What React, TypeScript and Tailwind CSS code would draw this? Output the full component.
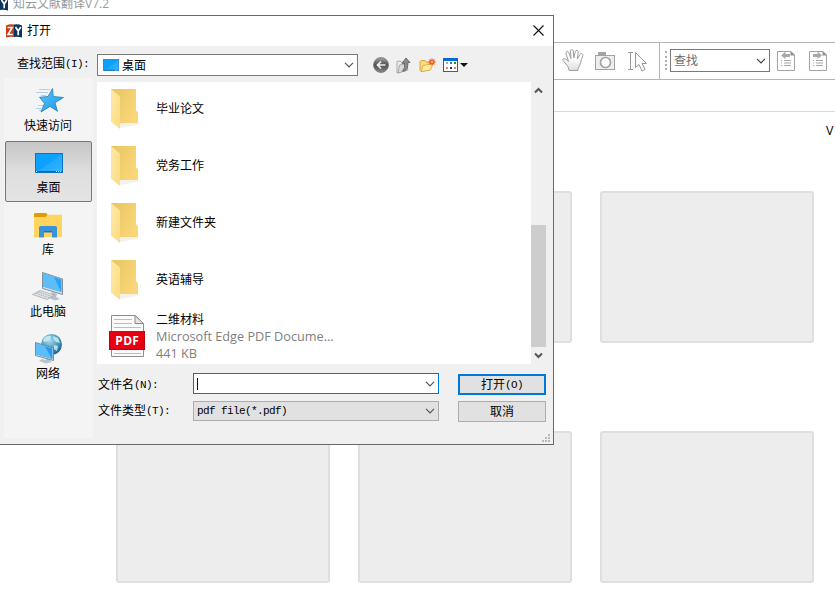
import React from "react";

const CJK = "font-['Open_Sans','Noto_Sans_CJK_SC',sans-serif]";

const Chevron: React.FC<{ color?: string }> = ({ color = "#555" }) => (
  <svg width="10" height="6" viewBox="0 0 10 6" fill="none" className="shrink-0">
    <path d="M1 0.8 L5 4.8 L9 0.8" stroke={color} strokeWidth="1.2" />
  </svg>
);

const ZyLogo: React.FC = () => (
  <svg width="16" height="14" viewBox="0 0 16 14" className="shrink-0">
    <path d="M0 1.500 Q4 -0.500 8 0.500 V13 Q4 12.500 0 13.500Z" fill="#c93a16" />
    <path d="M8 0.500 Q12 -0.500 16 1.500 V13.500 Q12 12.500 8 13Z" fill="#0d335f" />
    <path d="M1.500 3.500 H6.200 L2 10.500 H6.800" stroke="#fff" strokeWidth="1.600" fill="none" />
    <path d="M9.500 3 L12.200 7 L14.800 3 M12.200 7 V11.300" stroke="#fff" strokeWidth="1.700" fill="none" />
  </svg>
);

const DesktopIcon: React.FC<{ w: number; h: number }> = ({ w, h }) => (
  <svg width={w} height={h} viewBox="0 0 28 20" preserveAspectRatio="none" className="shrink-0">
    <defs>
      <linearGradient id="screen" x1="0" y1="0" x2="1" y2="1">
        <stop offset="0.5" stopColor="#0ea0ff" />
        <stop offset="0.52" stopColor="#1faaff" />
        <stop offset="1" stopColor="#36b4ff" />
      </linearGradient>
    </defs>
    <rect x="0.500" y="0.500" width="27" height="19" fill="url(#screen)" stroke="#0d74c4" />
    <path d="M1 18.500 H27" stroke="#0b5f9f" />
    <path d="M1 18.500 H3 M21 18.500 H27" stroke="#fff" strokeDasharray="1 1" />
  </svg>
);

const StarIcon: React.FC = () => (
  <svg width="32" height="32" viewBox="0 0 32 32" className="shrink-0">
    <defs>
      <linearGradient id="star" x1="0" y1="0" x2="1" y2="1">
        <stop offset="0" stopColor="#5cc8fa" />
        <stop offset="1" stopColor="#1d93e4" />
      </linearGradient>
    </defs>
    <path d="M7 4.500 H18 M4 7.500 H16 M9 10.500 H14 M6 20.500 H11 M4 23.500 H9 M7 25.500 H10" stroke="#9cc9e8" strokeWidth="0.8" />
    <path
      d="M20.500 3.500 L21.300 11.500 L31.500 12.500 L23 17.800 L25.500 26.300 L18 21.400 L9 27 L12.500 18.400 L7.500 12.300 L16 11.500 Z"
      fill="url(#star)"
      stroke="#2281bd"
      strokeWidth="0.8"
    />
  </svg>
);

const LibraryIcon: React.FC = () => (
  <svg width="28" height="25" viewBox="0 0 28 25" className="shrink-0">
    <path d="M0 1.500 Q0 0 1.500 0 H12 L13.500 1.800 H28 V24 H0Z" fill="#ffd55f" />
    <path d="M0 1.500 Q0 0 1.500 0 H12 L13.500 1.800 L11.500 4 H0Z" fill="#e09b00" />
    <path d="M5 24.500 V14.500 Q5 13 6.500 13 H21.500 Q23 13 23 14.500 V24.500 H18 V18 H10 V24.500Z" fill="#3a93d8" />
    <path d="M10 18 H18 V19.500 H10Z" fill="#2471b4" />
  </svg>
);

const ComputerIcon: React.FC = () => (
  <svg width="32" height="32" viewBox="0 0 32 32" className="shrink-0">
    <path d="M20 21 L25 23 L24 26 L28 28 L23 29.500 L17 27Z" fill="#b6c0c8" />
    <path d="M10.500 1.500 L30.500 8 V23.500 L10.500 17.500Z" fill="#d2dce2" stroke="#667b8b" strokeWidth="0.8" />
    <path d="M11 2.300 L29.500 8.500 V21 L11 15.500Z" fill="#2ca1f2" />
    <path d="M11 2.300 L22 6 L29 21 L11 15.500Z" fill="#5dbdf8" />
    <path d="M8 19.500 L22.500 24 L15 28.500 L0.500 23.500Z" fill="#dfe2e4" stroke="#9da3a7" strokeWidth="0.7" />
    <path d="M6 21 L20 25.500 M4 22.200 L17.500 27" stroke="#9aa0a4" strokeWidth="0.8" strokeDasharray="1.5 1" />
  </svg>
);

const NetworkIcon: React.FC = () => (
  <svg width="32" height="32" viewBox="0 0 32 32" className="shrink-0">
    <defs>
      <radialGradient id="globe" cx="0.4" cy="0.3" r="0.7">
        <stop offset="0" stopColor="#a9dcf0" />
        <stop offset="0.6" stopColor="#4b9cc2" />
        <stop offset="1" stopColor="#246687" />
      </radialGradient>
    </defs>
    <circle cx="19.500" cy="11.500" r="10.500" fill="url(#globe)" />
    <path d="M12 5 Q16 2 19 3 L18 7 L13 9 L11 8Z M21 3 L26 5 L28 10 L24 9 L22 7Z M22 12 L26 13 L25 18 L22 16Z" fill="#c9ecf5" opacity="0.85" />
    <path d="M10 26 L14 27 V24 H18 V27 L20 29 L14 30.500 L7 28Z" fill="#bac3c9" />
    <path d="M3.500 9.500 L21.500 15 V27.500 L3.500 22.500Z" fill="#d5dfe5" stroke="#5a7285" strokeWidth="0.8" />
    <path d="M4 10.300 L20.500 15.500 V26 L4 21.200Z" fill="#249bf0" />
    <path d="M4 10.300 L13 13 L19.500 25.500 L4 21.200Z" fill="#5bbdf9" />
  </svg>
);

const FolderIcon: React.FC = () => (
  <svg width="48" height="48" viewBox="0 0 48 48" className="shrink-0">
    <defs>
      <linearGradient id="back" x1="0" y1="0" x2="1" y2="0.6">
        <stop offset="0" stopColor="#e8c461" />
        <stop offset="1" stopColor="#f9d778" />
      </linearGradient>
      <linearGradient id="flap" x1="0" y1="0" x2="1" y2="1">
        <stop offset="0" stopColor="#ffe9a6" />
        <stop offset="1" stopColor="#fbdc84" />
      </linearGradient>
    </defs>
    <path d="M17 38 H38 L34 40 L17 43Z" fill="#f4f2ed" />
    <path d="M8 4 H33 V25 L35 27.500 V38 H17Z" fill="url(#back)" />
    <path d="M8 4 L17 11.500 V44 L8 36.500Z" fill="url(#flap)" />
  </svg>
);

const PdfIcon: React.FC = () => (
  <svg width="48" height="48" viewBox="0 0 48 48" className="shrink-0">
    <path d="M8.500 4.500 H32 L40.500 12.500 V45.500 H8.500Z" fill="#fafafa" stroke="#8d8d8d" />
    <path d="M32 4.500 V12.500 H40.500Z" fill="#e5e5e5" stroke="#8d8d8d" />
    <path d="M11 8.500 H29 M11 12.500 H29 M11 16.500 H38 M11 42.500 H38" stroke="#bcbcbc" />
    <rect x="6" y="20" width="36" height="19" fill="#e60012" />
    <path d="M6.500 20 V38.500 H41.500 V20" stroke="#b9000f" fill="none" />
    <text x="24.300" y="34" textAnchor="middle" fontSize="12" fontWeight="700" fill="#fff" className="font-['Open_Sans',sans-serif] tracking-[0.3px]">
      PDF
    </text>
  </svg>
);

// SimSun-like label: CJK glyphs with half-width latin
const Label: React.FC<{ text: string; latin: string }> = ({ text, latin }) => (
  <div className={`${CJK} flex items-center text-[12px] leading-4 whitespace-pre text-black`}>
    {text && <span>{text}</span>}
    {latin && (
      <span className="font-['Liberation_Mono',monospace] text-[11px] tracking-[-0.6px]">{latin}</span>
    )}
  </div>
);

const places = [
  { name: "快速访问", icon: <StarIcon /> },
  { name: "桌面", icon: <DesktopIcon w={28} h={20} />, active: true },
  { name: "库", icon: <LibraryIcon /> },
  { name: "此电脑", icon: <ComputerIcon /> },
  { name: "网络", icon: <NetworkIcon /> },
];

const folders = ["毕业论文", "党务工作", "新建文件夹", "英语辅导"];

const DialogTools: React.FC = () => (
  <div className="flex items-center ml-[15px]">
    <svg width="16" height="16" viewBox="0 0 16 16">
      <defs>
        <linearGradient id="ball" x1="0" y1="0" x2="0" y2="1">
          <stop offset="0" stopColor="#a5a5a5" />
          <stop offset="0.5" stopColor="#4e4e4e" />
          <stop offset="1" stopColor="#898989" />
        </linearGradient>
      </defs>
      <circle cx="8" cy="8" r="7.500" fill="url(#ball)" stroke="#777" strokeWidth="0.8" />
      <path d="M12.500 8 H4.500 M8 4.500 L4.500 8 L8 11.500" stroke="#f4f4f4" strokeWidth="1.700" fill="none" />
    </svg>
    <svg width="15" height="17" viewBox="0 0 15 17" className="ml-[7px]">
      <path d="M1 4.500 L4 4 L5 5 H8 V14 L1 16Z" fill="#ededed" stroke="#999" strokeWidth="0.8" />
      <path d="M3.500 8 L10 6.500 L12 13 L2 16Z" fill="#dadada" stroke="#999" strokeWidth="0.8" />
      <path d="M6.500 14 Q9.500 11 8.500 6 L6 6.500 L10 1 L14 5.500 L11.700 5.700 Q12.500 11.500 8.500 14Z" fill="#8c8c8c" stroke="#555" strokeWidth="0.8" />
    </svg>
    <svg width="17" height="15" viewBox="0 0 17 15" className="ml-2">
      <path d="M1 3.500 L2 2.500 H6 L7.500 4 H11 V12 L2 13.500 L1 12.500Z" fill="#f8dc82" stroke="#c9962b" strokeWidth="0.8" />
      <path d="M4 7.500 L14 5.500 L11.500 12 L2 13.500Z" fill="#ffeaa0" stroke="#d7a83c" strokeWidth="0.8" />
      <path d="M13 0.500 V7.500 M9.500 4 H16.500 M10.500 1.500 L15.500 6.500 M15.500 1.500 L10.500 6.500" stroke="#f2552b" strokeWidth="1.300" />
      <circle cx="13" cy="4" r="1.200" fill="#ffb24c" />
    </svg>
    <svg width="15" height="14" viewBox="0 0 15 14" className="ml-[7px]">
      <rect x="0.500" y="0.500" width="14" height="13" fill="#fff" stroke="#0969cf" />
      <rect width="15" height="3" fill="#0969cf" />
      <path d="M3 10 H5" stroke="#f08367" strokeWidth="2" />
      <path d="M3 5 H5" stroke="#a8a8cf" strokeWidth="2" />
      <path d="M7 5 H9" stroke="#1480e0" strokeWidth="2" />
      <path d="M11 5 H13" stroke="#0d9b25" strokeWidth="2" />
      <path d="M7 10 H9" stroke="#183d91" strokeWidth="2" />
      <path d="M11 10 H13" stroke="#d29b16" strokeWidth="2" />
    </svg>
    <svg width="8" height="4" viewBox="0 0 8 4" className="ml-0.5">
      <path d="M0 0 H8 L4 4Z" fill="#111" />
    </svg>
  </div>
);

const OpenDialog: React.FC = () => (
  <div className="absolute left-0 top-[15px] w-[554px] h-[430px] bg-[#f0f0f0] border-y border-r border-[#696969]">
    <div className="flex h-[30px] items-center bg-white pl-1.5 pr-[9px]">
      <ZyLogo />
      <span className={`${CJK} ml-[5px] text-[12px] leading-4 text-black`}>打开</span>
      <svg width="11" height="11" viewBox="0 0 11 11" className="ml-auto mb-[2px]">
        <path d="M0.500 0.500 L10.500 10.500 M10.500 0.500 L0.500 10.500" stroke="#111" strokeWidth="1.100" />
      </svg>
    </div>

    <div className="flex h-8 pt-2">
      <div className="w-[97px] pl-[17px] pt-0.5">
        <Label text="查找范围" latin="(I):" />
      </div>
      <div className="flex h-[22px] w-[261px] items-center border border-[#7a7a7a] bg-white pl-[5px] pr-[3px]">
        <DesktopIcon w={16} h={12} />
        <span className={`${CJK} ml-[3px] mt-px text-[12px] leading-4 text-black`}>桌面</span>
        <span className="ml-auto"><Chevron /></span>
      </div>
      <div className="h-[22px] flex">
        <DialogTools />
      </div>
    </div>

    <div className="flex">
      <div className="ml-1 h-[360px] w-[89px] bg-[#f4f4f4] pl-px pt-px">
        {places.map((p) => (
          <div
            key={p.name}
            className={
              p.active
                ? "mb-px flex h-[61px] w-[87px] flex-col items-center rounded-xs border border-[#767676] bg-gradient-to-b from-[#c6c6c6] via-[#dedede] to-[#e4e4e4] pt-[5px]"
                : "flex h-[62px] w-[86px] flex-col items-center pt-1.5"
            }
          >
            <div className="flex h-8 items-center">{p.icon}</div>
            <span className={`${CJK} mt-px text-[12px] leading-4 text-black`}>{p.name}</span>
          </div>
        ))}
      </div>

      <div className="ml-1 w-[449px] pt-1">
        <div className="flex h-[282px] overflow-hidden">
          <div className="w-[434px] bg-white pl-1.5">
            <div className="-mt-0.5">
              {folders.map((name) => (
                <div key={name} className="flex h-[57px] pt-[5px]">
                  <FolderIcon />
                  <span className={`${CJK} ml-[5px] mt-4 text-[12px] leading-4 text-black`}>{name}</span>
                </div>
              ))}
              <div className="flex h-[57px] pt-[3px]">
                <PdfIcon />
                <div className={`${CJK} ml-[5px] text-[12.7px] leading-[17px] text-[#808080]`}>
                  <div className="text-[12px] text-black">二维材料</div>
                  <div>Microsoft Edge PDF Docume...</div>
                  <div>441 KB</div>
                </div>
              </div>
            </div>
          </div>
          <div className="flex w-[15px] flex-col items-center">
            <svg width="9" height="7" viewBox="0 0 9 7" className="mt-[5px]">
              <path d="M1 5.500 L4.500 2 L8 5.500" stroke="#555" strokeWidth="2" fill="none" />
            </svg>
            <div className="mt-[131px] h-[122px] w-[15px] bg-[#cdcdcd]" />
            <svg width="9" height="7" viewBox="0 0 9 7" className="mt-[5px]">
              <path d="M1 1.500 L4.500 5 L8 1.500" stroke="#555" strokeWidth="2" fill="none" />
            </svg>
          </div>
        </div>

        <div className="mt-[9px] flex h-[22px]">
          <div className="w-24 pl-px pt-1">
            <Label text="文件名" latin="(N):" />
          </div>
          <div className="flex h-[21px] w-[246px] items-center border border-[#0078d7] bg-white pl-[3px] pr-[3px]">
            <span className="h-3 w-px bg-black" />
            <span className="ml-auto"><Chevron /></span>
          </div>
          <button className="ml-[19px] mt-px flex h-[21px] w-[88px] items-center justify-center border-2 border-[#0078d7] bg-[#e1e1e1]">
            <Label text="打开" latin="(O)" />
          </button>
        </div>
        <div className="mt-1.5 flex">
          <div className="w-24 pl-px pt-0.5">
            <Label text="文件类型" latin="(T):" />
          </div>
          <div className="flex h-5 w-[246px] items-center border border-[#adadad] bg-[#e1e1e1] pl-[3px] pr-[3px]">
            <Label text="" latin="pdf file(*.pdf)" />
            <span className="ml-auto"><Chevron /></span>
          </div>
          <button className="ml-[19px] flex h-[21px] w-[88px] items-center justify-center border border-[#adadad] bg-[#e1e1e1]">
            <Label text="取消" latin="" />
          </button>
        </div>
      </div>
    </div>

    <svg width="8" height="8" viewBox="0 0 8 8" className="absolute bottom-0.5 right-[3px]" fill="#b9b9b9">
      <path d="M6 0h2v2H6z M6 3h2v2H6z M6 6h2v2H6z M3 3h2v2H3z M3 6h2v2H3z M0 6h2v2H0z" />
    </svg>
  </div>
);

const PageIcon: React.FC<{ flip?: boolean }> = ({ flip }) => (
  <svg width="18" height="20" viewBox="0 0 18 20" fill="none" className="shrink-0">
    <path d="M0.500 0.500 H14 L17.500 4 V19.500 H0.500Z" stroke="#a3a3a3" />
    <path d="M13.500 0 L18 4.500 H13.500Z" fill="#8f8f8f" />
    <path
      d={flip ? "M4 3 H8.500 V0.500 L13 4.500 L8.500 8 V6 H4Z" : "M13 3 H8.500 V0.500 L4 4.500 L8.500 8 V6 H13Z"}
      fill="#a8a8a8"
    />
    <path d="M7 9.500 H14 M7 12 H14 M7 14.500 H14" stroke="#a8a8a8" />
    <path d="M4 9.500 H5 M4 12 H5 M4 14.500 H5" stroke="#a8a8a8" />
  </svg>
);

const Toolbar: React.FC = () => (
  <div className="ml-[554px] flex h-[38px] border-y border-[#b4b4b8]">
    <div className="flex w-[106px] border-r border-[#b4b4b8] pl-2">
      <svg width="22" height="23" viewBox="0 0 22 23" className="mt-1.5">
        <defs>
          <linearGradient id="hand" x1="0" y1="0" x2="0" y2="1">
            <stop offset="0.4" stopColor="#fff" />
            <stop offset="1" stopColor="#ddd" />
          </linearGradient>
        </defs>
        <path
          d="M7 21.500 Q7 18 4 15 L1 11.500 Q0 10 2 9.700 Q4 9.700 6.500 12.500 L4 4.800 Q3.500 3 5 2.500 Q6.500 2.300 7 4 L9 9.500 L8.300 2 Q8.300 0.600 9.700 0.500 Q11.200 0.600 11.300 2 L11.800 9 L13.300 2.500 Q13.800 1 15.200 1.400 Q16.400 1.800 16.200 3.200 L15.300 10 L18 5.500 Q19 4 20.200 4.700 Q21.500 5.500 20.700 7 Q19 11 18.500 14 Q18 17 16 19.500 V21.500Z"
          fill="url(#hand)"
          stroke="#a0a0a0"
        />
      </svg>
      <svg width="20" height="18" viewBox="0 0 20 18" className="ml-[11px] mt-[9px]">
        <rect x="3" y="0" width="8" height="4" fill="#a3a3a3" />
        <rect x="0.500" y="3.500" width="19" height="14" fill="#eee" stroke="#a3a3a3" />
        <circle cx="10.500" cy="10.500" r="5" fill="#fff" stroke="#a3a3a3" strokeWidth="1.700" />
      </svg>
      <svg width="20" height="20" viewBox="0 0 20 20" fill="none" className="ml-[13px] mt-[9px] shrink-0">
        <path d="M0 0.500 H5 M2.500 0.500 V17.500 M0 17.500 H5" stroke="#999" />
        <path d="M7.500 0.500 V15.500 L11 12.500 L14 19 L17 17.500 L14 11.500 H18.500Z" stroke="#999" />
      </svg>
    </div>
    <div className="ml-[5px] mt-2 h-[19px] border-l-2 border-dotted border-[#b0b0b0]" />
    <div className="ml-[3px] mt-1.5 flex h-[23px] w-[100px] shrink-0 items-center border border-[#7a7a7a] bg-white pl-[3px] pr-[3px]">
      <span className={`${CJK} text-[12px] leading-4 text-[#6d6d6d]`}>查找</span>
      <span className="ml-auto"><Chevron color="#444" /></span>
    </div>
    <div className="ml-[7px] mt-2 flex gap-[14px]">
      <PageIcon />
      <PageIcon flip />
    </div>
  </div>
);

const App: React.FC = () => (
  <div className="relative h-[594px] w-[835px] overflow-hidden bg-white">
    <div className="flex h-[42px]">
      <div className="-ml-2 -mt-[3px]">
        <ZyLogo />
      </div>
      <span className={`${CJK} -mt-[4px] ml-[5px] text-[12px] leading-4 text-[#999]`}>知云文献翻译V7.2</span>
    </div>
    <Toolbar />
    <div className="h-8 border-b border-[#dadada]" />
    <div className="flex h-[79px] justify-end overflow-hidden pt-[11px]">
      <span className={`${CJK} w-[9px] text-[12.5px] leading-4 text-black`}>V</span>
    </div>
    <div className="grid w-[698px] grid-cols-3 gap-x-7 gap-y-[88px] ml-[116px]">
      {Array.from({ length: 6 }, (_, i) => (
        <div key={i} className="h-[152px] rounded-[3px] border-2 border-[#dfdfdf] bg-[#ededed]" />
      ))}
    </div>

    <OpenDialog />
  </div>
);

export default App;
